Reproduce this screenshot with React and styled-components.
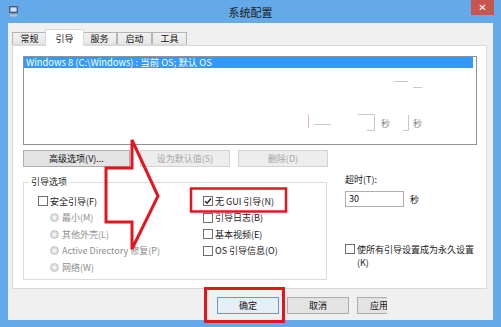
import React from "react";
import styled, { createGlobalStyle } from "styled-components";

const GlobalStyle = createGlobalStyle`
  html, body { margin: 0; padding: 0; background: #ffffff; }
  body {
    font-family: "Noto Sans CJK SC", "Noto Sans", sans-serif;
    font-size: 9px;
    color: #1a1a1a;
  }
  * { box-sizing: border-box; }
`;

const Frame = styled.div`
  position: relative;
  width: 501px;
  height: 327px;
  background: #64aaea;
  display: flex;
  flex-direction: column;
  overflow: hidden;
`;

const TitleBar = styled.div`
  height: 23px;
  flex: none;
  display: grid;
  grid-template-columns: 1fr auto 1fr;
  align-items: center;
`;

const AppIcon = styled.svg`
  width: 9px;
  height: 11px;
  margin-left: 9px;
`;

const Title = styled.div`
  font-size: 11px;
  color: #202020;
  line-height: 22px;
`;

const CloseButton = styled.div`
  justify-self: end;
  align-self: start;
  width: 23px;
  height: 15px;
  margin-right: 7px;
  background: #c85450;
  color: #fff;
  font-family: "DejaVu Sans", sans-serif;
  font-size: 10px;
  font-weight: bold;
  display: flex;
  align-items: center;
  justify-content: center;
`;

const Client = styled.div`
  flex: 1;
  margin: 0 8px 7px;
  background: #f0f0f0;
  padding: 6px 6px 0 4px;
  display: flex;
  flex-direction: column;
`;

const TabStrip = styled.div`
  height: 16px;
  display: flex;
  align-items: flex-end;
  position: relative;
  z-index: 1;
`;

const Tab = styled.div`
  width: ${(p) => (p.$active ? 39 : 35)}px;
  height: ${(p) => (p.$active ? 17 : 13)}px;
  margin: 0 ${(p) => (p.$active ? -2 : 0)}px ${(p) => (p.$active ? -1 : 0)}px;
  border: 1px solid ${(p) => (p.$active ? "#d9d9d9" : "#b4b4b4")};
  border-bottom: ${(p) => (p.$active ? "none" : "1px solid #d9d9d9")};
  background: ${(p) => (p.$active ? "#ffffff" : "linear-gradient(#f2f2f2, #e6e6e6)")};
  position: relative;
  z-index: ${(p) => (p.$active ? 2 : 1)};
  display: flex;
  align-items: center;
  justify-content: center;
  line-height: 11px;
  color: #111;
`;

const Panel = styled.div`
  height: 244px;
  flex: none;
  border: 1px solid #d9d9d9;
  background: #ffffff;
  padding: 10px 9px 0 10px;
  display: flex;
  flex-direction: column;
`;

const ListBox = styled.div`
  position: relative;
  height: 89px;
  border: 1px solid #8e9298;
  background: #fff;
`;

const ListRow = styled.div`
  height: 11px;
  margin-right: 3px;
  padding-left: 2px;
  font-size: 9.4px;
  line-height: 11px;
  background: ${(p) => (p.$selected ? "#3399ff" : "transparent")};
  color: ${(p) => (p.$selected ? "#ffffff" : "#000")};
  white-space: nowrap;
`;

const Smudges = styled.svg`
  position: absolute;
  left: 0;
  top: 0;
  width: 452px;
  height: 87px;
  pointer-events: none;
`;

const ButtonRow = styled.div`
  margin-top: 5px;
  display: flex;
`;

const Button = styled.div`
  width: ${(p) => p.$w}px;
  height: 17px;
  margin-right: ${(p) => p.$gap || 0}px;
  border: 1px solid ${(p) => (p.$disabled ? "#d3d3d3" : p.$default ? "#5f9bd6" : "#adadad")};
  ${(p) => (p.$clipped ? "border-right: none;" : "")}
  background: ${(p) => (p.$disabled ? "#ededed" : p.$default ? "#e5edf5" : "#e3e3e3")};
  color: ${(p) => (p.$disabled ? "#a5a5a5" : "#111")};
  display: flex;
  align-items: center;
  justify-content: ${(p) => (p.$clipped ? "flex-start" : "center")};
  padding-left: ${(p) => (p.$clipped ? 12 : 0)}px;
  overflow: hidden;
  white-space: nowrap;
`;

const Lower = styled.div`
  display: flex;
  align-items: flex-start;
`;

const GroupBox = styled.fieldset`
  width: 304px;
  margin: 9px 0 0;
  padding: 5px 0 3px 14px;
  border: 1px solid #dcdcdc;
  display: flex;
  min-width: 0;
`;

const GroupLegend = styled.legend`
  padding: 0 2px;
  margin-left: -9px;
  line-height: 12px;
  color: #222;
`;

const Column = styled.div`
  width: ${(p) => p.$w || "auto"};
  display: flex;
  flex-direction: column;
`;

const OptionRow = styled.div`
  height: 16.5px;
  display: flex;
  align-items: center;
  padding-left: ${(p) => (p.$indent ? 12 : 0)}px;
  color: ${(p) => (p.$disabled ? "#8e8e8e" : "#1a1a1a")};
  white-space: nowrap;
`;

const CheckBox = styled.span`
  width: 10px;
  height: 10px;
  flex: none;
  border: 1px solid #6f6f6f;
  background: #fff;
  margin-right: 2px;
  display: flex;
  align-items: center;
  justify-content: center;
`;

const Radio = styled.span`
  width: 9px;
  height: 9px;
  flex: none;
  border-radius: 50%;
  border: 1px solid #c2c2c2;
  background: radial-gradient(circle, #f4f4f4 0 30%, #dedede 40%);
  margin-right: 3px;
`;

const SideColumn = styled.div`
  margin-left: 18px;
  padding-top: 7px;
  width: 132px;
  display: flex;
  flex-direction: column;
`;

const FieldLabel = styled.div`
  line-height: 12px;
  color: #1a1a1a;
`;

const InputRow = styled.div`
  margin-top: 5px;
  display: flex;
  align-items: center;
`;

const TextInput = styled.div`
  width: 59px;
  height: 16px;
  border: 1px solid #abadb3;
  background: #fff;
  padding-left: 3px;
  line-height: 14px;
  color: #111;
`;

const Unit = styled.span`
  margin-left: 6px;
`;

const PermanentRow = styled.div`
  margin-top: 37px;
  display: flex;
  align-items: flex-start;
`;

const WrapText = styled.span`
  width: 119px;
  line-height: 13px;
  margin-top: -1px;
  color: #1a1a1a;
`;

const Footer = styled.div`
  height: 31px;
  padding: 8px 0 0 205px;
  display: flex;
  align-items: flex-start;
`;

const Annotations = styled.svg`
  position: absolute;
  left: 0;
  top: 0;
  width: 501px;
  height: 327px;
  pointer-events: none;
`;

const Check = () => (
  <svg width="8" height="8" viewBox="0 0 8 8">
    <path d="M1 4.2 L3.1 6.3 L7 1.5" fill="none" stroke="#222" strokeWidth="1.4" />
  </svg>
);

const tabs = ["常规", "引导", "服务", "启动", "工具"];

export default function App() {
  return (
    <>
      <GlobalStyle />
      <Frame>
        <TitleBar>
          <AppIcon viewBox="0 0 9 11">
            <rect x="0.5" y="0.5" width="8" height="6" fill="#5a7fa8" stroke="#4a5a70" strokeWidth="1" />
            <rect x="1.5" y="1.5" width="6" height="4" fill="#cfe2f5" />
            <rect x="3" y="7" width="3" height="1.5" fill="#7c8a99" />
            <rect x="1" y="8.5" width="7" height="2" fill="#b9c3cc" />
          </AppIcon>
          <Title>系统配置</Title>
          <CloseButton>✕</CloseButton>
        </TitleBar>

        <Client>
          <TabStrip>
            {tabs.map((t) => (
              <Tab key={t} $active={t === "引导"}>{t}</Tab>
            ))}
          </TabStrip>

          <Panel>
            <ListBox>
              <ListRow $selected>Windows 8 (C:\Windows) : 当前 OS; 默认 OS</ListRow>
              <Smudges viewBox="0 0 452 87">
                <g stroke="#c8c8c8" strokeWidth="1" fill="none">
                  <line x1="370" y1="24.5" x2="384" y2="24.5" />
                  <line x1="389" y1="30.5" x2="398" y2="30.5" />
                  <line x1="284.5" y1="57" x2="284.5" y2="71" stroke="#e6b8c0" />
                  <line x1="290" y1="67.5" x2="307" y2="67.5" />
                  <polyline points="334,57.5 350.5,57.5 350.5,73.5 343,73.5" />
                  <polyline points="384.5,58 384.5,73.5 379,73.5" />
                </g>
                <text x="357" y="70" fontSize="9" fill="#8a8a8a">秒</text>
                <text x="389" y="70" fontSize="9" fill="#8a8a8a">秒</text>
              </Smudges>
            </ListBox>

            <ButtonRow>
              <Button $w={107} $gap={10}>高级选项(V)...</Button>
              <Button $w={90} $gap={8} $disabled>设为默认值(S)</Button>
              <Button $w={90} $disabled>删除(D)</Button>
            </ButtonRow>

            <Lower>
              <GroupBox>
                <GroupLegend>引导选项</GroupLegend>
                <Column $w="165px">
                  <OptionRow><CheckBox />安全引导(F)</OptionRow>
                  <OptionRow $indent $disabled><Radio />最小(M)</OptionRow>
                  <OptionRow $indent $disabled><Radio />其他外壳(L)</OptionRow>
                  <OptionRow $indent $disabled><Radio />Active Directory 修复(P)</OptionRow>
                  <OptionRow $indent $disabled><Radio />网络(W)</OptionRow>
                </Column>
                <Column>
                  <OptionRow><CheckBox><Check /></CheckBox>无 GUI 引导(N)</OptionRow>
                  <OptionRow><CheckBox />引导日志(B)</OptionRow>
                  <OptionRow><CheckBox />基本视频(E)</OptionRow>
                  <OptionRow><CheckBox />OS 引导信息(O)</OptionRow>
                </Column>
              </GroupBox>

              <SideColumn>
                <FieldLabel>超时(T):</FieldLabel>
                <InputRow>
                  <TextInput>30</TextInput>
                  <Unit>秒</Unit>
                </InputRow>
                <PermanentRow>
                  <CheckBox />
                  <WrapText>使所有引导设置成为永久设置(K)</WrapText>
                </PermanentRow>
              </SideColumn>
            </Lower>
          </Panel>

          <Footer>
            <Button $w={62} $gap={8} $default>确定</Button>
            <Button $w={62} $gap={8}>取消</Button>
            <Button $w={30} $clipped>应用</Button>
          </Footer>
        </Client>

        <Annotations viewBox="0 0 501 327">
          <g fill="none" stroke="#e2161f" strokeWidth="3" strokeLinejoin="miter">
            <rect x="191" y="188.5" width="95" height="23" strokeWidth="2.5" />
            <rect x="205.5" y="288.5" width="78" height="33" />
            <polygon points="132,140 158,196 132,249 132,222 106,222 106,168 132,168" />
          </g>
        </Annotations>
      </Frame>
    </>
  );
}
